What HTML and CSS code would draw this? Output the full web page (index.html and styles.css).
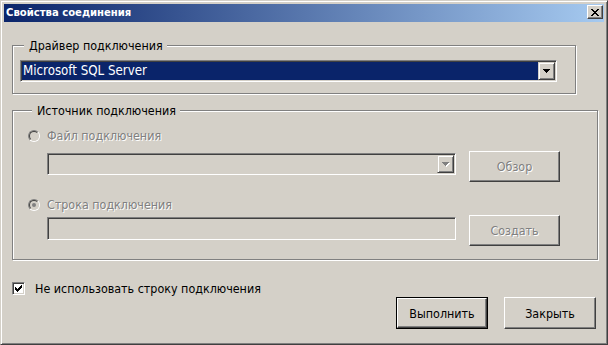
FILE: index.html
```html
<!DOCTYPE html>
<html lang="ru">
<head>
<meta charset="utf-8">
<title>Свойства соединения</title>
<link rel="stylesheet" href="styles.css">
</head>
<body>
<div class="window">
  <div class="titlebar">
    <span class="title">Свойства соединения</span>
    <span class="close" aria-label="Закрыть">
      <svg width="8" height="7" viewBox="0 0 8 7" shape-rendering="crispEdges"><path d="M0 0h2v1H0zM6 0h2v1H6zM1 1h2v1H1zM5 1h2v1H5zM2 2h4v1H2zM3 3h2v1H3zM2 4h4v1H2zM1 5h2v1H1zM5 5h2v1H5zM0 6h2v1H0zM6 6h2v1H6z" fill="#000"/></svg>
    </span>
  </div>
  <div class="content">
    <fieldset class="group group-driver">
      <legend class="group-label">Драйвер подключения</legend>
      <div class="combo combo-driver">
        <div class="combo-value selected">Microsoft SQL Server</div>
        <div class="combo-btn">
          <svg width="7" height="4" viewBox="0 0 7 4" shape-rendering="crispEdges"><path d="M0 0h7v1H0zM1 1h5v1H1zM2 2h3v1H2zM3 3h1v1H3z" fill="#000"/></svg>
        </div>
      </div>
    </fieldset>

    <fieldset class="group group-source">
      <legend class="group-label">Источник подключения</legend>
      <div class="radio-row row-file">
        <span class="radio"><span class="radio-inner"></span></span>
        <span class="disabled-text">Файл подключения</span>
      </div>
      <div class="input-row row-file-input">
        <div class="combo combo-file disabled">
          <div class="combo-value"></div>
          <div class="combo-btn">
            <svg width="8" height="5" viewBox="0 0 8 5" shape-rendering="crispEdges"><path d="M1 1h7v1H1zM2 2h5v1H2zM3 3h3v1H3zM4 4h1v1H4z" fill="#fff"/><path d="M0 0h7v1H0zM1 1h5v1H1zM2 2h3v1H2zM3 3h1v1H3z" fill="#808080"/></svg>
          </div>
        </div>
        <div class="btn disabled"><span class="disabled-text">Обзор</span></div>
      </div>
      <div class="radio-row row-string">
        <span class="radio"><span class="radio-inner"><span class="radio-dot"></span></span></span>
        <span class="disabled-text">Строка подключения</span>
      </div>
      <div class="input-row row-string-input">
        <div class="field disabled"></div>
        <div class="btn disabled"><span class="disabled-text">Создать</span></div>
      </div>
    </fieldset>

    <div class="check-row">
      <span class="checkbox">
        <svg width="7" height="7" viewBox="0 0 7 7" shape-rendering="crispEdges"><path d="M6 0h1v3H6zM5 1h1v3H5zM4 2h1v3H4zM3 3h1v3H3zM2 4h1v3H2zM1 3h1v3H1zM0 2h1v3H0z" fill="#000"/></svg>
      </span>
      <span class="check-label">Не использовать строку подключения</span>
    </div>

    <div class="actions">
      <div class="btn btn-default"><span class="btn-face">Выполнить</span></div>
      <div class="btn btn-close">Закрыть</div>
    </div>
  </div>
</div>
</body>
</html>
```

FILE: styles.css
```css
* { box-sizing: border-box; }

html, body {
  margin: 0;
  padding: 0;
  width: 608px;
  height: 345px;
  overflow: hidden;
  background: #d4d0c8;
}

body {
  font-family: "DejaVu Sans Condensed", "DejaVu Sans", sans-serif;
  font-size: 12.4px;
  color: #000;
}

.window {
  width: 608px;
  height: 345px;
  border: 1px solid;
  border-color: #d4d0c8 #404040 #404040 #d4d0c8;
  box-shadow: inset 1px 1px 0 #fff, inset -1px -1px 0 #808080;
  padding: 3px;
  display: flex;
  flex-direction: column;
}

/* Title bar */
.titlebar {
  height: 18px;
  flex: none;
  display: flex;
  justify-content: space-between;
  align-items: flex-start;
  padding: 0 1px 0 2px;
  background: linear-gradient(to right, #0a246a, #a6caf0);
  color: #fff;
  font-weight: bold;
  font-size: 11.2px;
}

.title {
  line-height: 17px;
}

.close {
  margin-top: 1px;
  width: 16px;
  height: 14px;
  display: flex;
  align-items: center;
  justify-content: center;
  background: #d4d0c8;
  border: 1px solid;
  border-color: #fff #404040 #404040 #fff;
  box-shadow: inset -1px -1px 0 #808080;
}

/* Content */
.content {
  flex: 1;
  display: flex;
  flex-direction: column;
  padding: 0 8px 0 8px;
}

.group {
  margin: 0;
  padding: 0;
  border: 1px solid #808080;
  box-shadow: inset 1px 1px 0 #fff, 1px 1px 0 #fff;
  min-width: 0;
}

.group-label {
  margin-left: 4px;
  padding: 0 4px 0 5px;
  line-height: 15px;
  background: #d4d0c8;
}

.group-driver {
  margin-top: 16px;
  width: 564px;
  padding: 7px 0 11px 7px;
}

.group-source {
  margin-top: 9px;
  width: 586px;
  padding: 0 0 13px 15px;
}

/* Combo boxes */
.combo {
  display: flex;
  height: 22px;
  border: 1px solid;
  border-color: #808080 #fff #fff #808080;
  box-shadow: inset 1px 1px 0 #404040, inset -1px -1px 0 #d4d0c8;
  padding: 1px;
  background: #fff;
}

.combo-driver {
  width: 537px;
}

.combo-value {
  flex: 1;
  line-height: 18px;
  padding-left: 1px;
  white-space: nowrap;
}

.combo-value.selected {
  background: #0a246a;
  color: #fff;
  font-size: 13.2px;
}

.combo-btn {
  width: 17px;
  flex: none;
  display: flex;
  align-items: center;
  justify-content: center;
  background: #d4d0c8;
  border: 1px solid;
  border-color: #d4d0c8 #404040 #404040 #d4d0c8;
  box-shadow: inset 1px 1px 0 #fff, inset -1px -1px 0 #808080;
}

.combo.disabled,
.field.disabled {
  background: #d4d0c8;
}

.combo-file {
  width: 409px;
  margin-top: 2px;
}

.field {
  width: 409px;
  height: 23px;
  margin-top: 2px;
  border: 1px solid;
  border-color: #808080 #fff #fff #808080;
  box-shadow: inset 1px 1px 0 #404040, inset -1px -1px 0 #d4d0c8;
}

/* Radio rows */
.radio-row {
  display: flex;
  align-items: center;
  gap: 7px;
  height: 15px;
}

.row-file { margin-top: 10px; }
.row-string { margin-top: 15px; }

.radio {
  width: 12px;
  height: 12px;
  border-radius: 50%;
  border: 1px solid;
  border-color: #808080 #fff #fff #808080;
  flex: none;
}

.radio-inner {
  display: flex;
  align-items: center;
  justify-content: center;
  width: 10px;
  height: 10px;
  border-radius: 50%;
  border: 1px solid;
  border-color: #404040 #d4d0c8 #d4d0c8 #404040;
  background: #d4d0c8;
}

.radio-dot {
  width: 4px;
  height: 4px;
  border-radius: 50%;
  background: #808080;
}

.disabled-text {
  color: #808080;
  text-shadow: 1px 1px 0 #fff;
}

/* Input rows */
.input-row {
  display: flex;
  align-items: flex-start;
  gap: 13px;
  padding-left: 19px;
  height: 31px;
}

.row-file-input { margin-top: 8px; }
.row-string-input { margin-top: 3px; }

/* Buttons */
.btn {
  width: 91px;
  height: 31px;
  display: flex;
  align-items: center;
  justify-content: center;
  background: #d4d0c8;
  border: 1px solid;
  border-color: #fff #404040 #404040 #fff;
  box-shadow: inset -1px -1px 0 #808080;
}

.btn-default {
  width: 92px;
  height: 32px;
  border: 1px solid #000;
  box-shadow: none;
  padding: 0;
}

.btn-face {
  width: 100%;
  height: 100%;
  display: flex;
  align-items: center;
  justify-content: center;
  border: 1px solid;
  border-color: #fff #404040 #404040 #fff;
  box-shadow: inset -1px -1px 0 #808080;
}

.btn-close {
  width: 92px;
  height: 32px;
}

/* Checkbox */
.check-row {
  margin-top: 22px;
  display: flex;
  align-items: center;
  gap: 10px;
  height: 13px;
}

.checkbox {
  width: 13px;
  height: 13px;
  flex: none;
  display: flex;
  align-items: center;
  justify-content: center;
  background: #fff;
  border: 1px solid;
  border-color: #808080 #fff #fff #808080;
  box-shadow: inset 1px 1px 0 #404040, inset -1px -1px 0 #d4d0c8;
}

.actions {
  margin-top: 2px;
  display: flex;
  justify-content: flex-end;
  gap: 16px;
}
```
